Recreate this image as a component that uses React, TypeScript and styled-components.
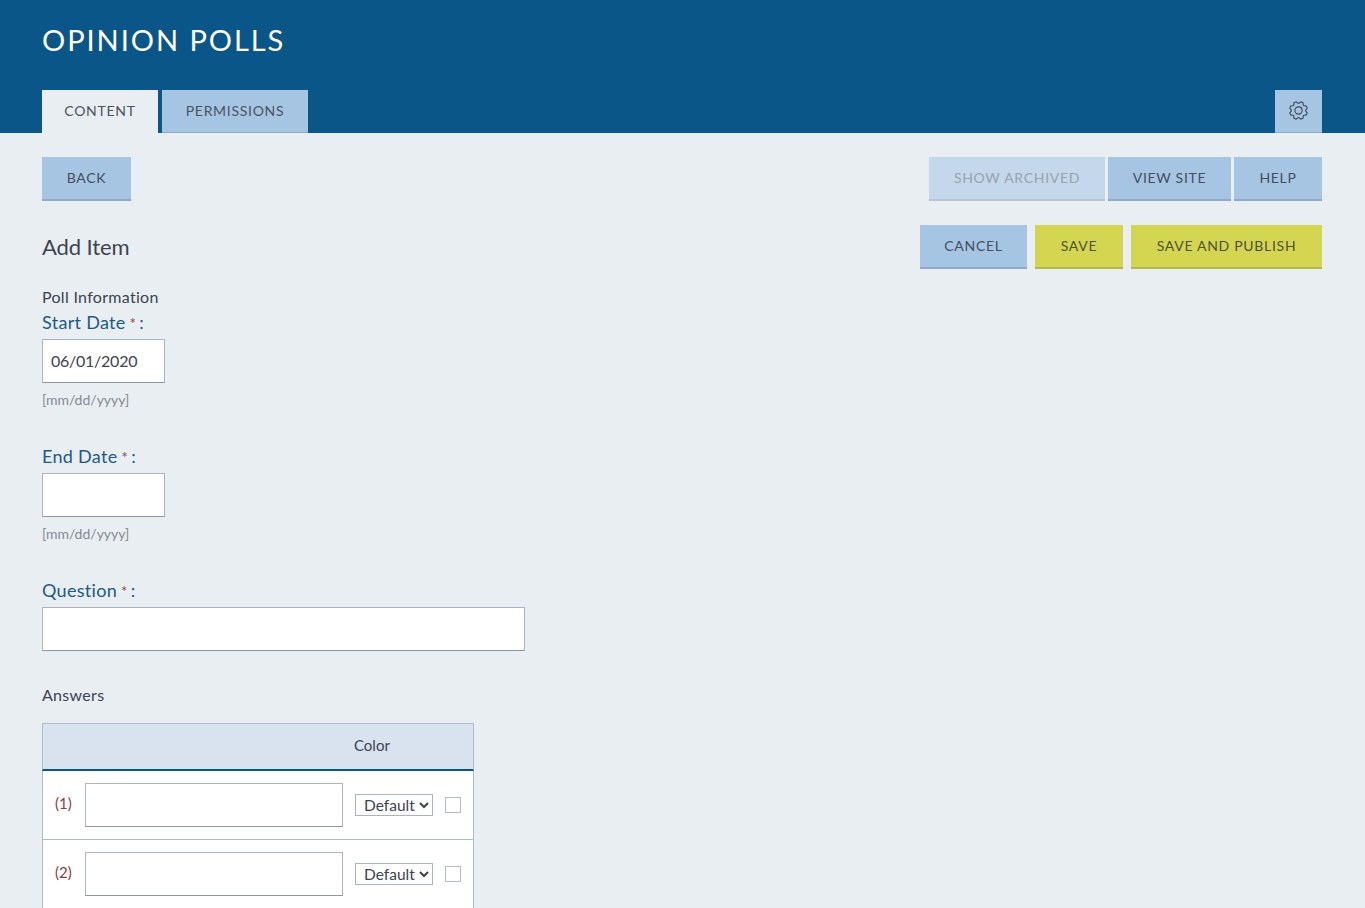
import React from "react";
import styled, { createGlobalStyle } from "styled-components";
import { PiGearLight } from "react-icons/pi";

const Global = createGlobalStyle`
  html, body { margin: 0; padding: 0; height: 908px; overflow: hidden; background: #e9eef3; }
  body { font-family: "Lato", "Open Sans", sans-serif; color: #3d4350; }
  * { box-sizing: border-box; }
`;

const Header = styled.header`
  height: 133px;
  background: #0b5688;
  padding: 0 43px 0 42px;
  display: flex;
  flex-direction: column;
  justify-content: space-between;
`;
const Title = styled.h1`
  margin: 22px 0 0;
  font-size: 29px;
  line-height: 36px;
  font-weight: 400;
  letter-spacing: 1.95px;
  color: #fff;
`;
const TabBar = styled.nav`
  display: flex;
  gap: 4px;
  align-items: flex-end;
`;
const Tab = styled.div<{ $active?: boolean; $w: number }>`
  width: ${(p) => p.$w}px;
  height: 43px;
  display: flex;
  align-items: center;
  justify-content: center;
  padding-bottom: 2px;
  font-size: 14px;
  letter-spacing: 0.7px;
  color: #4a5360;
  background: ${(p) => (p.$active ? "#e9eef3" : "#a6c5e3")};
  border-bottom: ${(p) => (p.$active ? "0" : "1px solid #8ea6c0")};
`;
const GearTab = styled(Tab)`
  margin-left: auto;
  padding-bottom: 1px;
`;
const Main = styled.main`
  padding: 24px 43px 0 42px;
`;
const Row = styled.div`
  display: flex;
  justify-content: space-between;
  align-items: flex-start;
`;
const Group = styled.div<{ $gap: number }>`
  display: flex;
  gap: ${(p) => p.$gap}px;
`;
const Btn = styled.button<{ $w: number; $kind?: "dim" | "yellow" }>`
  width: ${(p) => p.$w}px;
  height: 44px;
  padding: 0 0 2px;
  border: 0;
  border-bottom: 2px solid
    ${(p) => (p.$kind === "yellow" ? "#b4b64e" : p.$kind === "dim" ? "#b6c6d8" : "#8ea9c9")};
  background: ${(p) => (p.$kind === "yellow" ? "#d4d651" : p.$kind === "dim" ? "#c5d7ea" : "#a6c5e3")};
  color: ${(p) => (p.$kind === "dim" ? "#97a3b1" : p.$kind === "yellow" ? "#4f5132" : "#434e5f")};
  font-family: inherit;
  font-size: 14px;
  letter-spacing: 0.7px;
`;
const FormHead = styled(Row)`
  margin-top: 24px;
`;
const Heading = styled.h2`
  margin: 9px 0 0;
  font-size: 22px;
  line-height: 26px;
  font-weight: 400;
  letter-spacing: -0.1px;
  color: #3d4350;
`;
const Section = styled.div`
  font-size: 16px;
  line-height: 20px;
  letter-spacing: 0.3px;
  color: #3d4350;
`;
const InfoTitle = styled(Section)`
  margin-top: 18px;
`;
const Field = styled.div`
  margin-bottom: 34px;
`;
const Label = styled.div`
  margin-top: 3px;
  height: 29px;
  font-size: 18px;
  line-height: 24px;
  letter-spacing: 0.3px;
  color: #1d5a86;
`;
const Req = styled.span`
  font-size: 15px;
  color: #a23a3a;
  margin: 0 3px 0 4px;
`;
const Input = styled.input<{ $w: number }>`
  display: block;
  width: ${(p) => p.$w}px;
  height: 44px;
  margin: 0;
  padding: 0 8px 2px;
  border: 1px solid #aab3bf;
  border-bottom-color: #8f97a3;
  background: #fff;
  font-family: inherit;
  font-size: 16px;
  letter-spacing: -0.25px;
  color: #3d4350;
  border-radius: 0;
  outline: 0;
`;
const Hint = styled.div`
  margin-top: 7px;
  height: 20px;
  font-size: 14px;
  line-height: 20px;
  color: #858a92;
`;
const Table = styled.div`
  margin-top: 18px;
  width: 432px;
  background: #fff;
  border: 1px solid #aebccb;
  border-bottom: 0;
`;
const THead = styled.div`
  height: 47px;
  background: #d9e3ef;
  border: 1px solid #aebccb;
  border-width: 0 1px;
  border-bottom: 2px solid #0b5688;
  margin: 0 -1px;
  padding-left: 311px;
  font-size: 15px;
  line-height: 42px;
  color: #3d4350;
`;
const AnswerRow = styled.div`
  display: flex;
  align-items: center;
  height: 69px;
  padding: 0 12px 1px 12px;
  border-bottom: 1px solid #aebccb;
`;
const Num = styled.div`
  width: 30px;
  font-size: 15px;
  color: #8f3a46;
  margin-top: -3px;
`;
const ColorSelect = styled.select`
  width: 78px;
  height: 22px;
  margin: 0 12px;
  padding: 0 0 0 4px;
  border: 1px solid #aab3bf;
  border-radius: 0;
  background: #fff;
  font-family: inherit;
  font-size: 15.5px;
  color: #3d4350;
`;
const Check = styled.span`
  width: 16px;
  height: 16px;
  border: 1px solid #b4bcc7;
  background: #fff;
`;

export default function App() {
  return (
    <>
      <Global />
      <Header>
        <Title>OPINION POLLS</Title>
        <TabBar>
          <Tab $active $w={116}>CONTENT</Tab>
          <Tab $w={146}>PERMISSIONS</Tab>
          <GearTab $w={47}>
            <PiGearLight size={23} color="#3a4658" />
          </GearTab>
        </TabBar>
      </Header>
      <Main>
        <Row>
          <Btn $w={89}>BACK</Btn>
          <Group $gap={3}>
            <Btn $w={176} $kind="dim">SHOW ARCHIVED</Btn>
            <Btn $w={123}>VIEW SITE</Btn>
            <Btn $w={88}>HELP</Btn>
          </Group>
        </Row>
        <FormHead>
          <Heading>Add Item</Heading>
          <Group $gap={8}>
            <Btn $w={107}>CANCEL</Btn>
            <Btn $w={88} $kind="yellow">SAVE</Btn>
            <Btn $w={191} $kind="yellow">SAVE AND PUBLISH</Btn>
          </Group>
        </FormHead>
        <InfoTitle>Poll Information</InfoTitle>
        <Field>
          <Label>Start Date<Req>*</Req>:</Label>
          <Input $w={123} defaultValue="06/01/2020" />
          <Hint>[mm/dd/yyyy]</Hint>
        </Field>
        <Field>
          <Label>End Date<Req>*</Req>:</Label>
          <Input $w={123} />
          <Hint>[mm/dd/yyyy]</Hint>
        </Field>
        <Field>
          <Label>Question<Req>*</Req>:</Label>
          <Input $w={483} />
        </Field>
        <Section>Answers</Section>
        <Table>
          <THead>Color</THead>
          {[1, 2].map((n) => (
            <AnswerRow key={n}>
              <Num>({n})</Num>
              <Input $w={258} />
              <ColorSelect defaultValue="Default">
                <option>Default</option>
              </ColorSelect>
              <Check />
            </AnswerRow>
          ))}
        </Table>
      </Main>
    </>
  );
}
